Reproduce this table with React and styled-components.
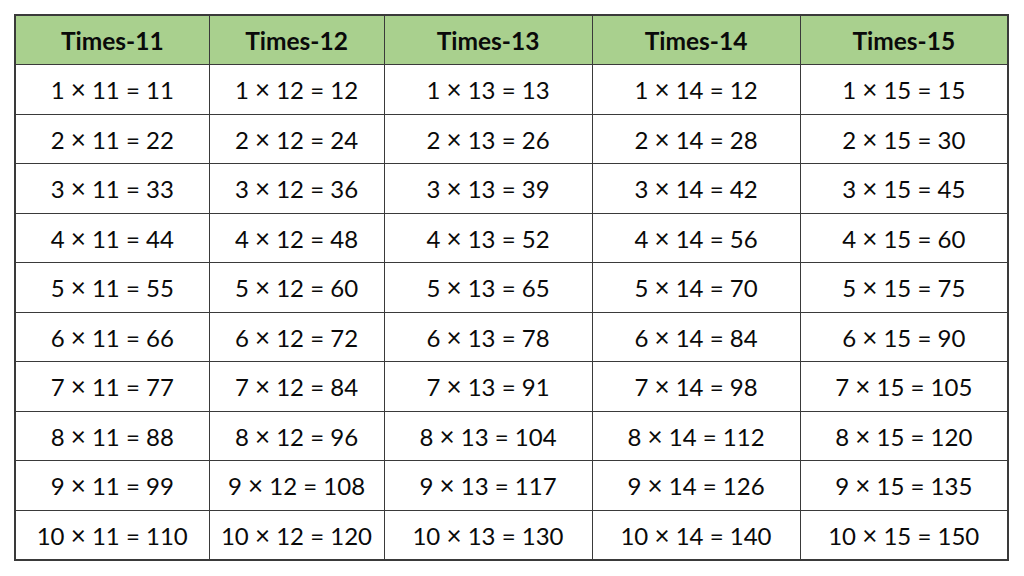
import React from "react";
import styled, { createGlobalStyle } from "styled-components";

const GlobalStyle = createGlobalStyle`
  html, body {
    margin: 0;
    padding: 0;
    background: #ffffff;
  }
  body {
    font-family: "Lato", "Open Sans", sans-serif;
    color: #111;
  }
`;

const columns = [
  { n: 11, width: 194 },
  { n: 12, width: 175 },
  { n: 13, width: 208 },
  { n: 14, width: 208 },
  { n: 15, width: 208 },
];

// the source sheet has this typo, kept as is
const override = { "14-1": 12 };

export default function App() {
  const rows = Array.from({ length: 10 }, (_, i) => i + 1);
  return (
    <>
      <GlobalStyle />
      <Page>
        <Table>
          <colgroup>
            {columns.map(c => (
              <col key={c.n} style={{ width: c.width }} />
            ))}
          </colgroup>
          <thead>
            <tr>
              {columns.map(c => (
                <HeadCell key={c.n}>Times-{c.n}</HeadCell>
              ))}
            </tr>
          </thead>
          <tbody>
            {rows.map(r => (
              <tr key={r}>
                {columns.map(c => {
                  const key = `${c.n}-${r}`;
                  const result = override[key] ?? c.n * r;
                  return (
                    <Cell key={key}>
                      {r} <Times>×</Times> {c.n} = {result}
                    </Cell>
                  );
                })}
              </tr>
            ))}
          </tbody>
        </Table>
      </Page>
    </>
  );
}

const Page = styled.div`
  width: 1024px;
  height: 576px;
  box-sizing: border-box;
  padding: 14px 15px 0 14px;
`;

const Table = styled.table`
  border-collapse: collapse;
  table-layout: fixed;
  width: 994px;
  border: 2px solid #3a3a3a;
`;

const HeadCell = styled.th`
  height: 48px;
  padding: 0;
  background: #a9d08e;
  border: 1.5px solid #3a3a3a;
  font-size: 24.5px;
  font-weight: 700;
  text-align: center;
  color: #0a0a0a;
`;

const Cell = styled.td`
  height: 48.5px;
  padding: 0;
  border: 1.5px solid #3a3a3a;
  font-size: 24px;
  font-weight: 400;
  text-align: center;
  color: #0a0a0a;
`;

const Times = styled.span`
  font-size: 26px;
`;
